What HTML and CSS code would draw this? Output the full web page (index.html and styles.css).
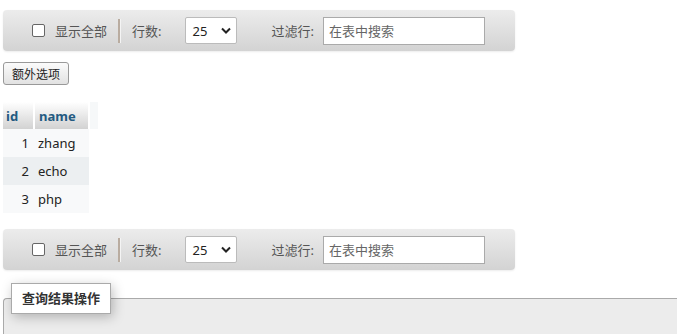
FILE: index.html
```html
<!DOCTYPE html>
<html lang="zh">
<head>
<meta charset="utf-8">
<link rel="stylesheet" href="styles.css">
</head>
<body>
<div class="navbar">
  <label class="showall"><input type="checkbox" class="cb"><span>显示全部</span></label>
  <span class="sep"></span>
  <span class="lbl">行数:</span>
  <div class="sel"><span>25</span><svg width="10" height="7" viewBox="0 0 10 7"><path d="M1 1.5 L5 5.5 L9 1.5" fill="none" stroke="#222" stroke-width="2"/></svg></div>
  <span class="lbl filter">过滤行:</span>
  <div class="search">在表中搜索</div>
</div>

<button class="extra">额外选项</button>

<table class="data">
  <thead>
    <tr><th class="c-id">id</th><th class="c-name">name</th><th class="c-pad"></th></tr>
  </thead>
  <tbody>
    <tr class="odd"><td class="num">1</td><td>zhang</td></tr>
    <tr class="even"><td class="num">2</td><td>echo</td></tr>
    <tr class="odd"><td class="num">3</td><td>php</td></tr>
  </tbody>
</table>

<div class="navbar second">
  <label class="showall"><input type="checkbox" class="cb"><span>显示全部</span></label>
  <span class="sep"></span>
  <span class="lbl">行数:</span>
  <div class="sel"><span>25</span><svg width="10" height="7" viewBox="0 0 10 7"><path d="M1 1.5 L5 5.5 L9 1.5" fill="none" stroke="#222" stroke-width="2"/></svg></div>
  <span class="lbl filter">过滤行:</span>
  <div class="search">在表中搜索</div>
</div>

<fieldset class="ops">
  <legend>查询结果操作</legend>
</fieldset>
</body>
</html>
```

FILE: styles.css
```css
html, body {
  margin: 0;
  padding: 0;
  background: #fff;
}
body {
  font-family: "Noto Sans", "Noto Sans CJK SC", sans-serif;
  font-size: 13px;
  color: #444;
  padding: 0 0 0 3px;
  overflow: hidden;
  height: 334px;
}
.navbar {
  margin-top: 10px;
  width: 512px;
  height: 41px;
  box-sizing: border-box;
  border-radius: 4px;
  background: linear-gradient(#ececec, #d3d3d3);
  box-shadow: 0 1px 2px rgba(0,0,0,0.08);
  display: flex;
  align-items: center;
  padding-left: 29px;
}
.navbar.second {
  margin-top: 16px;
}
.showall {
  display: flex;
  align-items: center;
  color: #555;
}
.cb {
  margin: 0 10px 0 0;
  width: 13px;
  height: 13px;
  appearance: none;
  -webkit-appearance: none;
  border: 1px solid #666;
  border-radius: 2px;
  background: #fff;
}
.sep {
  width: 3px;
  height: 24px;
  background: #b9aca0;
  margin: 0 11px 0 11px;
  border-right: 1px solid #f4f4f4;
  box-sizing: border-box;
}
.lbl {
  color: #555;
}
.sel {
  margin-left: 23px;
  width: 52px;
  height: 27px;
  box-sizing: border-box;
  background: #fff;
  border: 1px solid #bbb;
  border-radius: 2px;
  display: flex;
  align-items: center;
  justify-content: space-between;
  padding: 0 5px 0 7px;
  color: #222;
}
.filter {
  margin-left: 35px;
}
.search {
  margin-left: 9px;
  width: 162px;
  height: 28px;
  box-sizing: border-box;
  background: #fff;
  border: 1px solid #aaa;
  display: flex;
  align-items: center;
  padding-left: 5px;
  color: #666;
}
.extra {
  display: block;
  margin-top: 11px;
  width: 66px;
  height: 23px;
  padding: 0;
  font-family: "Noto Sans CJK SC", sans-serif;
  font-size: 12px;
  color: #222;
  background: linear-gradient(#fbfbfb, #e2e2e2);
  border: 1px solid #999;
  border-radius: 3px;
}
.data {
  margin-top: 17px;
  border-collapse: collapse;
  font-size: 13px;
}
.data th {
  height: 27px;
  padding: 0 4px;
  text-align: left;
  font-weight: bold;
  color: #235a81;
  background: linear-gradient(#ffffff, #d2d2d2);
  border-right: 2px solid #fff;
  box-sizing: border-box;
}
.data th.c-id { width: 31px; padding-left: 3px; }
.data th.c-name { width: 55px; }
.data th.c-pad {
  width: 9px;
  padding: 0;
  background: #f6f8f9;
  border-right: none;
}
.data td {
  height: 28px;
  padding: 0 4px 0 4px;
  color: #222;
}
.data td.num {
  text-align: right;
  padding-right: 5px;
}
.data tr.odd td { background: #f8f9fa; }
.data tr.even td { background: #eceff1; }
.ops {
  margin: 13px 0 0 0;
  padding: 0;
  height: 60px;
  background: #ececec;
  border: 1px solid #aaa;
  border-right: none;
  border-bottom: none;
  border-radius: 4px 0 0 0;
}
.ops legend {
  margin-left: 7px;
  padding: 0 10px;
  height: 31px;
  line-height: 29px;
  box-sizing: border-box;
  background: #fff;
  border: 1px solid #aaa;
  box-shadow: 2px 3px 12px rgba(0,0,0,0.25);
  font-weight: bold;
  color: #333;
  font-size: 13px;
}
```
